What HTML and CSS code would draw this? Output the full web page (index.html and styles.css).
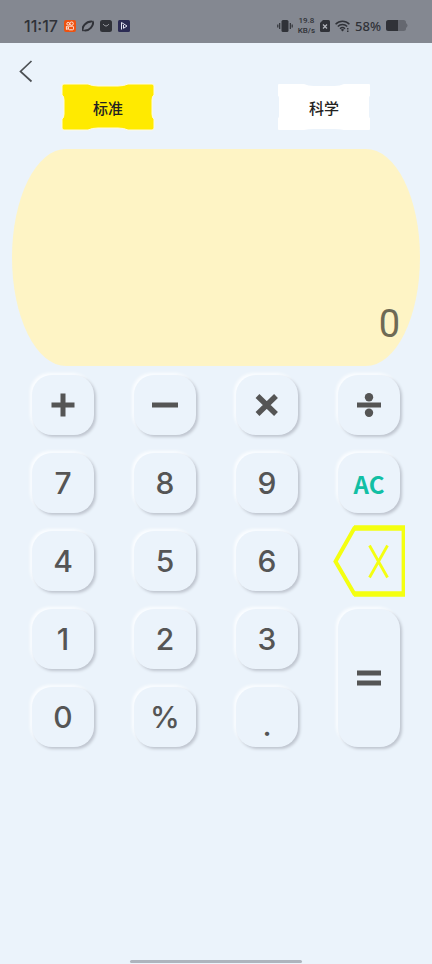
FILE: index.html
```html
<!DOCTYPE html>
<html lang="zh-CN">
<head>
<meta charset="utf-8">
<meta name="viewport" content="width=device-width, initial-scale=1">
<title>计算器</title>
<link rel="stylesheet" href="styles.css">
</head>
<body>
<div class="status">
  <div class="status-group status-left">
    <span class="clock">11:17</span>
    <svg width="12" height="12" viewBox="0 0 12 12"><rect width="12" height="12" rx="2" fill="#ee5210"/><g fill="none" stroke="#ffe9df" stroke-width="1"><circle cx="4.2" cy="3.8" r="1.4"/><circle cx="7.6" cy="3.6" r="1.7"/><rect x="4.5" y="6.2" width="5" height="3.6" rx="1"/><path d="M4.5 7.2L2.4 6.4v3l2.1-.8"/></g></svg>
    <svg width="12" height="12" viewBox="0 0 12 12"><g fill="none" stroke="#303238"><path d="M.8 10.800C-.5 7 4 1.200 9.800 1.500" stroke-width="2"/><path d="M2.500 10.500C7.500 11 11.500 6 11.200 1.500" stroke-width="2"/><path d="M.6 10.900L3 10.300M9 1.500L11.500 1.200" stroke-width="1"/></g></svg>
    <svg width="12" height="12" viewBox="0 0 12 12"><rect width="12" height="12" rx="2.500" fill="#303238"/><path d="M3.300 4c1 2.600 4.400 2.600 5.400 0" fill="none" stroke="#a4a7ad"/></svg>
    <svg width="12" height="12" viewBox="0 0 12 12"><rect width="12" height="12" rx="1.500" fill="#2c2c54"/><path d="M3.500 9.500V2.500L9 6 5.500 8.300V5" fill="none" stroke="#e4e4f2"/></svg>
  </div>
  <div class="status-group status-right">
    <svg width="16" height="14" viewBox="0 0 16 14"><rect x="4.500" y="1" width="7" height="12" rx="1.500" fill="#303238"/><path d="M2.700 4v6M.8 5.500v3M13.300 4v6M15.200 5.500v3" stroke="#303238" stroke-width="1.200"/></svg>
    <span class="speed"><span>19.8</span><span>KB/s</span></span>
    <svg width="10" height="12" viewBox="0 0 10 12"><path d="M3 0h5.500Q10 0 10 1.500v9Q10 12 8.500 12h-7Q0 12 0 10.500V3z" fill="#303238"/><path d="M3 4.500l4 4M7 4.500l-4 4" stroke="#b4b7bd" stroke-width="1.200"/></svg>
    <svg width="15" height="12" viewBox="0 0 15 12"><g fill="none" stroke="#303238" stroke-width="1.500"><path d="M.6 4.200C4.500.2 10.500.2 14.400 4.200M2.800 6.500c2.700-2.700 6.700-2.700 9.400 0M5 8.700c1.500-1.400 3.500-1.400 5 0"/></g><path d="M5.800 9.700L7.500 11.500 9.200 9.700Q7.500 8.500 5.800 9.700zM12 8h1.500v1.500H12zM12 10.400h1.500V12H12z" fill="#303238"/></svg>
    <span class="percent">58%</span>
    <svg width="22" height="11" viewBox="0 0 22 11"><path d="M2.500 0h15Q20 0 20 2.500v6Q20 11 17.500 11h-15Q0 11 0 8.500v-6Q0 0 2.500 0z" fill="#656870"/><path d="M12 0H2.500Q0 0 0 2.500v6Q0 11 2.500 11H12z" fill="#303238"/><path d="M20 3q3 2.500 0 5z" fill="#656870"/></svg>
  </div>
</div>
<header class="top">
  <button class="back" aria-label="返回"><svg width="14" height="24" viewBox="0 0 14 24"><path d="M12.500 2L1.500 12.500 12.500 22.500" fill="none" stroke="#4c5054" stroke-width="1.700"/></svg></button>
</header>
<nav class="tabs">
  <button class="tab active"><svg viewBox="0 0 94 48"><path d="M3 1H27Q31 3 37 3H57Q63 3 67 1H91Q93 1 93 3V12Q91 13 91 17V31Q91 35 93 36V45Q93 47 91 47H67Q63 45 57 45H37Q31 45 27 47H3Q1 47 1 45V36Q3 35 3 31V17Q3 13 1 12V3Q1 1 3 1z"/></svg><span>标准</span></button>
  <button class="tab"><svg viewBox="0 0 94 48"><path d="M2 1H27Q31 3 37 3H57Q63 3 67 1H92Q93 1 93 2V13Q92 13 92 15V33Q92 35 93 35V46Q93 47 92 47H67Q63 46 57 46H37Q31 46 27 47H2Q1 47 1 46V35Q2 35 2 33V15Q2 13 1 13V2Q1 1 2 1z"/></svg><span>科学</span></button>
</nav>
<main>
  <output class="display">0</output>
  <div class="keys">
    <button class="key" aria-label="加"><svg width="24" height="24" viewBox="0 0 24 24"><path d="M12 .5v23M.5 12h23" stroke="#555" stroke-width="5"/></svg></button>
    <button class="key" aria-label="减"><svg width="26" height="24" viewBox="0 0 26 24"><path d="M0 12h26" stroke="#555" stroke-width="5"/></svg></button>
    <button class="key" aria-label="乘"><svg width="24" height="24" viewBox="0 0 24 24"><path d="M2.500 3l18.500 18M21 3l-18.500 18" stroke="#555" stroke-width="5.500"/></svg></button>
    <button class="key" aria-label="除"><svg width="24" height="24" viewBox="0 0 24 24"><path d="M0 12h24" stroke="#555" stroke-width="5"/><circle cx="12" cy="4.200" r="4.200" fill="#555"/><circle cx="12" cy="19.800" r="4.200" fill="#555"/></svg></button>
    <button class="key">7</button>
    <button class="key">8</button>
    <button class="key">9</button>
    <button class="key clear">AC</button>
    <button class="key">4</button>
    <button class="key">5</button>
    <button class="key">6</button>
    <button class="erase" aria-label="删除"><svg width="72" height="72" viewBox="0 0 72 72"><g fill="none" stroke="#f4ff10"><path d="M21 3H72M21 69H72" stroke-width="5.500"/><path d="M70.300 1v70" stroke-width="3.400"/><path d="M22 2L2.500 36.500 22 70" stroke-width="4"/><path d="M36.500 20.500l18 32M54.500 20.500l-18 32" stroke-width="2.800"/></g></svg></button>
    <button class="key">1</button>
    <button class="key">2</button>
    <button class="key">3</button>
    <button class="key equals" aria-label="等于"><svg width="24" height="16" viewBox="0 0 24 16"><path d="M0 3h24M0 13h24" stroke="#555" stroke-width="5"/></svg></button>
    <button class="key">0</button>
    <button class="key">%</button>
    <button class="key point">.</button>
  </div>
</main>
<div class="home-bar"></div>
</body>
</html>
```
FILE: styles.css
```css
* { box-sizing: border-box; }

body {
  margin: 0;
  min-height: 100vh;
  display: flex;
  flex-direction: column;
  background: #ebf3fb;
  font-family: Inter, "Noto Sans CJK SC", sans-serif;
  color: #555;
}

button {
  margin: 0;
  padding: 0;
  border: 0;
  background: none;
  color: inherit;
  font: inherit;
  cursor: pointer;
}

svg { display: block; }

.status {
  height: 43px;
  padding: 8px 24px 0;
  display: flex;
  align-items: center;
  justify-content: space-between;
  background: #848891;
  color: #303238;
  font-weight: 500;
}

.status-group { display: flex; align-items: center; }
.status-left { gap: 6px; }
.status-right { gap: 5px; }
.clock { font-size: 16px; }
.percent { font-family: "Noto Sans", sans-serif; font-size: 13px; }

.speed {
  display: flex;
  flex-direction: column;
  align-items: center;
  font-family: Roboto, sans-serif;
  font-size: 8px;
  line-height: 10px;
}

.top { height: 40px; padding: 16px 19px 0; }

.tabs {
  display: grid;
  grid-template-columns: 1fr 1fr;
  justify-items: center;
}

.tab {
  display: grid;
  place-items: center;
  width: 94px;
  height: 48px;
  color: #222;
  font-size: 15px;
  font-weight: 500;
}

.tab > * { grid-area: 1 / 1; }
.tab svg { width: 100%; fill: #fff; }
.tab.active svg { fill: #ffea00; stroke: #fffbe0; }

main { padding: 18px 12px 0; flex: 1; }

.display {
  display: flex;
  align-items: flex-end;
  justify-content: flex-end;
  height: 217px;
  padding: 0 20px 16px;
  border-radius: 54px / 50%;
  background: #fef4c5;
  color: #6e6a55;
  font-family: Roboto, sans-serif;
  font-size: 38px;
  line-height: 52px;
}

.keys {
  display: grid;
  grid-template-columns: repeat(4, 1fr);
  grid-auto-rows: 78px;
  place-items: center;
}

.key {
  display: flex;
  align-items: center;
  justify-content: center;
  width: 62px;
  height: 60px;
  border-radius: 20px;
  background: #ebf3fb;
  box-shadow: 2px 2px 3px #bfc5cf, -2px -2px 3px #fbfdff;
  font-size: 30px;
  font-weight: 500;
}

.clear {
  color: #12bfa4;
  font-family: "Noto Sans CJK SC", sans-serif;
  font-size: 24px;
  font-weight: 700;
}

.equals { grid-row: span 2; height: 138px; }
.point { align-items: flex-end; padding-bottom: 4px; }

.home-bar {
  width: 40%;
  height: 3px;
  margin: 0 auto 1px;
  border-radius: 2px;
  background: #aeb4bd;
}
```
